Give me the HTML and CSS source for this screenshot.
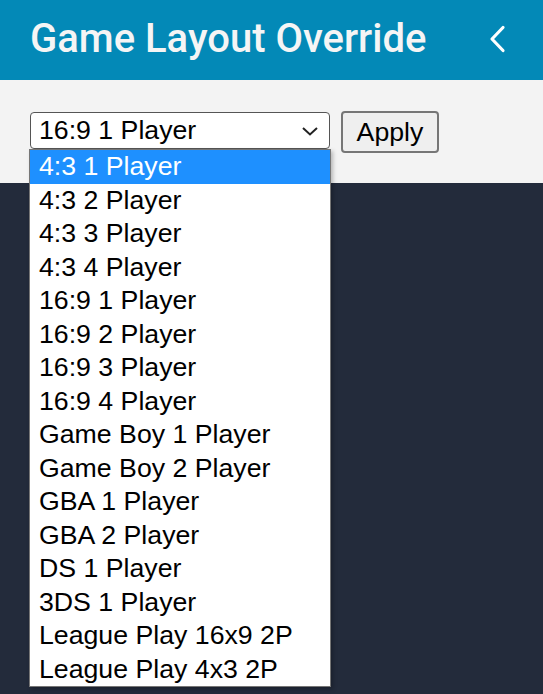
FILE: index.html
```html
<!DOCTYPE html>
<html>
<head>
<meta charset="utf-8">
<link rel="stylesheet" href="styles.css">
</head>
<body>
<header class="topbar">
  <h1 class="title">Game Layout Override</h1>
  <button class="back" aria-label="Back">
    <svg width="20" height="30" viewBox="0 0 20 30"><path d="M15 3.5 L4 15 L15 26.5" fill="none" stroke="#fff" stroke-width="3.2" stroke-linecap="round" stroke-linejoin="round"/></svg>
  </button>
</header>
<section class="controls">
  <div class="select-wrap">
    <div class="select">
      <span class="select-value">16:9 1 Player</span>
      <svg class="caret" width="18" height="10" viewBox="0 0 18 10"><path d="M2 2 L9 8.5 L16 2" fill="none" stroke="#222" stroke-width="2"/></svg>
    </div>
    <ul class="listbox">
      <li class="opt active">4:3 1 Player</li>
      <li class="opt">4:3 2 Player</li>
      <li class="opt">4:3 3 Player</li>
      <li class="opt">4:3 4 Player</li>
      <li class="opt">16:9 1 Player</li>
      <li class="opt">16:9 2 Player</li>
      <li class="opt">16:9 3 Player</li>
      <li class="opt">16:9 4 Player</li>
      <li class="opt">Game Boy 1 Player</li>
      <li class="opt">Game Boy 2 Player</li>
      <li class="opt">GBA 1 Player</li>
      <li class="opt">GBA 2 Player</li>
      <li class="opt">DS 1 Player</li>
      <li class="opt">3DS 1 Player</li>
      <li class="opt">League Play 16x9 2P</li>
      <li class="opt">League Play 4x3 2P</li>
    </ul>
  </div>
  <button class="apply">Apply</button>
</section>
<main class="stage"></main>
</body>
</html>
```
FILE: styles.css
```css
html, body {
  margin: 0;
  padding: 0;
  height: 100%;
}
body {
  display: flex;
  flex-direction: column;
  background: #232b3b;
  font-family: "Liberation Sans", Arial, sans-serif;
}
.topbar {
  height: 80px;
  flex: 0 0 80px;
  background: #0389b7;
  display: flex;
  align-items: center;
  justify-content: space-between;
  padding: 0 35px 0 30px;
  box-sizing: border-box;
}
.title {
  margin: 0;
  font-family: Roboto, "Noto Sans", sans-serif;
  font-weight: 500;
  font-size: 40px;
  color: #f5f5f5;
  letter-spacing: 0;
  padding-bottom: 4px;
}
.back {
  background: none;
  border: 0;
  padding: 0;
  width: 20px;
  height: 30px;
  display: flex;
  margin-top: -2px;
}
.controls {
  flex: 0 0 103px;
  height: 103px;
  box-sizing: border-box;
  background: #f3f3f3;
  display: flex;
  align-items: flex-start;
  gap: 11px;
  padding: 31px 0 0 30px;
}
.select-wrap {
  position: relative;
  margin-top: 1px;
}
.select {
  width: 300px;
  height: 37px;
  box-sizing: border-box;
  border: 1.5px solid #555;
  border-radius: 4px;
  background: #fff;
  display: flex;
  align-items: center;
  justify-content: space-between;
  padding: 0 10px 0 8px;
  font-size: 26.7px;
  color: #000;
}
.select-value {
  line-height: 1;
}
.caret {
  margin-top: 1px;
}
.listbox {
  position: absolute;
  top: 37px;
  left: -1px;
  width: 302px;
  margin: 0;
  padding: 0;
  list-style: none;
  background: #fff;
  border: 1px solid #767676;
  box-sizing: border-box;
  box-shadow: 2px 2px 4px rgba(0,0,0,0.25);
  z-index: 5;
}
.opt {
  height: 33.5px;
  line-height: 33.5px;
  padding-left: 9px;
  font-size: 26.7px;
  color: #000;
  white-space: nowrap;
}
.opt.active {
  background: #1e90ff;
  color: #fff;
}
.apply {
  height: 42px;
  width: 98px;
  box-sizing: border-box;
  border: 2px solid #767676;
  border-radius: 4px;
  background: #efefef;
  font-family: "Liberation Sans", Arial, sans-serif;
  font-size: 26.7px;
  color: #000;
  padding: 0;
}
.stage {
  flex: 1;
  background: #232b3b;
}
```
